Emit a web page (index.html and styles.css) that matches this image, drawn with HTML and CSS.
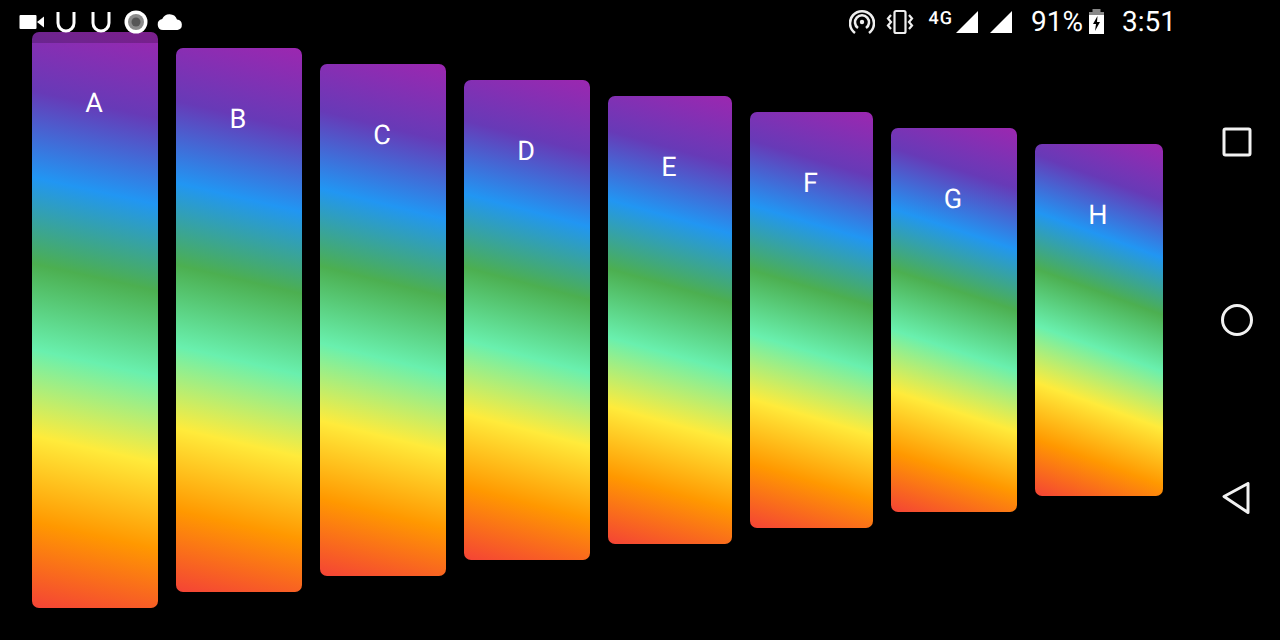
FILE: index.html
```html
<!DOCTYPE html>
<html lang="en">
<head>
<meta charset="utf-8">
<title>Gradient cards</title>
<link rel="stylesheet" href="styles.css">
</head>
<body>
<div class="screen">
  <main class="cards">
    <div class="card card-a">A</div>
    <div class="card card-b">B</div>
    <div class="card card-c">C</div>
    <div class="card card-d">D</div>
    <div class="card card-e">E</div>
    <div class="card card-f">F</div>
    <div class="card card-g">G</div>
    <div class="card card-h">H</div>
  </main>
  <nav class="nav">
    <svg class="nav-icon" viewBox="0 0 32 32"><rect x="3" y="3" width="26" height="26" rx="1.500"/></svg>
    <svg class="nav-icon" viewBox="0 0 32 32"><circle cx="16" cy="16" r="14.500"/></svg>
    <svg class="nav-icon" viewBox="0 0 32 32"><path d="M3 16 27 3v29z" transform="translate(0 -1.500)"/></svg>
  </nav>
  <header class="status">
    <div class="status-left">
      <svg class="icon-cam" viewBox="0 0 26 16"><path d="M1.500 1h15q1 0 1 1v12q0 1-1 1h-15q-1 0-1-1V2q0-1 1-1z"/><path d="M18 8 25 2.500v11z"/></svg>
      <svg class="icon-u" viewBox="0 0 20 22"><path d="M2 1v11a8 8 0 0 0 16 0V1"/></svg>
      <svg class="icon-u icon-u2" viewBox="0 0 20 22"><path d="M2 1v11a8 8 0 0 0 16 0V1"/></svg>
      <svg class="icon-rec" viewBox="0 0 24 24"><circle class="rec-ring" cx="12" cy="12" r="11.500"/><circle class="rec-mid" cx="12" cy="12" r="8"/><circle class="rec-core" cx="12" cy="12" r="4.500"/></svg>
      <svg class="icon-cloud" viewBox="0 0 26 16"><path d="M6 16a5.500 5.500 0 0 1-.8-10.900A8 8 0 0 1 20 5.500 5.300 5.300 0 0 1 20.500 16z"/></svg>
    </div>
    <div class="status-right">
      <svg class="icon-hotspot" viewBox="0 0 26 26"><circle cx="13" cy="13" r="2.200" class="solid"/><path d="M9 19a7 7 0 1 1 8 0"/><path d="M6 24a12 12 0 1 1 14 0"/></svg>
      <svg class="icon-vibrate" viewBox="0 0 28 26"><rect x="8.500" y="2" width="11" height="22" rx="1.500"/><path d="M5 6 2 9.500l3 3.500-3 3.500L5 20M23 6l3 3.500-3 3.500 3 3.500-3 3.500"/></svg>
      <div class="network">
        <span class="net-label">4G</span>
        <svg class="icon-signal" viewBox="0 0 22 22"><path d="M22 0v22H0z"/></svg>
      </div>
      <svg class="icon-signal icon-signal2" viewBox="0 0 22 22"><path d="M22 0v22H0z"/></svg>
      <span class="battery-text">91%</span>
      <svg class="icon-battery" viewBox="0 0 15 25"><path class="battery-cap" d="M3.500 0h8v3h-8zM0 3h15v3H0z"/><path class="solid" fill-rule="evenodd" d="M0 6h15v19H0zM8.500 7 4 15h3l-1 7 5-9H8z"/></svg>
      <span class="clock">3:51</span>
    </div>
  </header>
</div>
</body>
</html>
```
FILE: styles.css
```css
* { box-sizing: border-box; }
html, body { margin: 0; height: 100%; background: #000; }
.screen {
  position: relative;
  display: flex;
  width: 1280px;
  height: 640px;
  overflow: hidden;
  background: #000;
  font-family: Roboto, "Liberation Sans", sans-serif;
  color: #fff;
  text-rendering: geometricPrecision;
}
.cards {
  display: flex;
  flex: 1;
  align-items: center;
  gap: 18px;
  padding-left: 32px;
}
.card {
  width: 126px;
  flex: none;
  padding: 56px 2px 0 0;
  border-radius: 7px;
  text-align: center;
  font-size: 27px;
  line-height: 30px;
  background: linear-gradient(var(--angle), #9c27b0 0%, #673ab7 14.3%, #2196f3 28.6%, #4caf50 42.9%, #69f0ae 57.1%, #ffeb3b 71.4%, #ff9800 85.7%, #f44336 100%);
}
.card-a { height: 576px; --angle: 192.3deg; }
.card-b { height: 544px; --angle: 193deg; }
.card-c { height: 512px; --angle: 193.8deg; }
.card-d { height: 480px; --angle: 194.7deg; }
.card-e { height: 448px; width: 124px; --angle: 195.5deg; }
.card-f { height: 416px; width: 123px; --angle: 196.5deg; }
.card-g { height: 384px; --angle: 198.2deg; }
.card-h { height: 352px; width: 128px; --angle: 200deg; }
.nav {
  width: 87px;
  flex: none;
  display: flex;
  flex-direction: column;
  align-items: center;
  justify-content: center;
  gap: 146px;
}
.nav-icon {
  width: 32px;
  height: 32px;
  fill: none;
  stroke: #f2f2f2;
  stroke-width: 3;
  stroke-linejoin: round;
}
.status {
  position: absolute;
  top: 0;
  left: 0;
  right: 0;
  height: 43px;
  display: flex;
  align-items: center;
  justify-content: space-between;
  background: rgba(0, 0, 0, 0.2);
  padding: 0 104px 0 19px;
}
.status-left, .status-right { display: flex; align-items: center; }
.status-left svg, .status-right svg { flex: none; }
.icon-cam { width: 26px; height: 16px; fill: #fff; margin-right: 11px; }
.icon-u { width: 20px; height: 22px; fill: none; stroke: #fff; stroke-width: 3; }
.icon-u2 { margin-left: 15px; }
.icon-rec { width: 24px; height: 24px; margin: 0 9px 0 13px; }
.rec-ring { fill: #fff; }
.rec-mid { fill: #8a8a8a; }
.rec-core { fill: #555; }
.icon-cloud { width: 26px; height: 16px; fill: #fff; }
.icon-hotspot { width: 26px; height: 26px; fill: none; stroke: #eee; stroke-width: 2.600; }
.icon-hotspot .solid { fill: #eee; stroke: none; }
.icon-vibrate { width: 28px; height: 26px; margin-left: 11px; fill: none; stroke: #eee; stroke-width: 2.200; }
.network { display: flex; align-items: flex-end; margin-left: 15px; }
.net-label { font-size: 18px; font-weight: 500; line-height: 16px; letter-spacing: 1px; margin-right: 3px; align-self: flex-start; }
.icon-signal { width: 22px; height: 22px; fill: #fff; }
.icon-signal2 { margin-left: 12px; }
.battery-text { font-size: 28px; line-height: 30px; margin-left: 19px; }
.icon-battery { width: 15px; height: 25px; margin-left: 6px; }
.battery-cap { fill: #888; }
.icon-battery .solid { fill: #fff; }
.clock { font-size: 28px; line-height: 30px; margin-left: 18px; }
```
